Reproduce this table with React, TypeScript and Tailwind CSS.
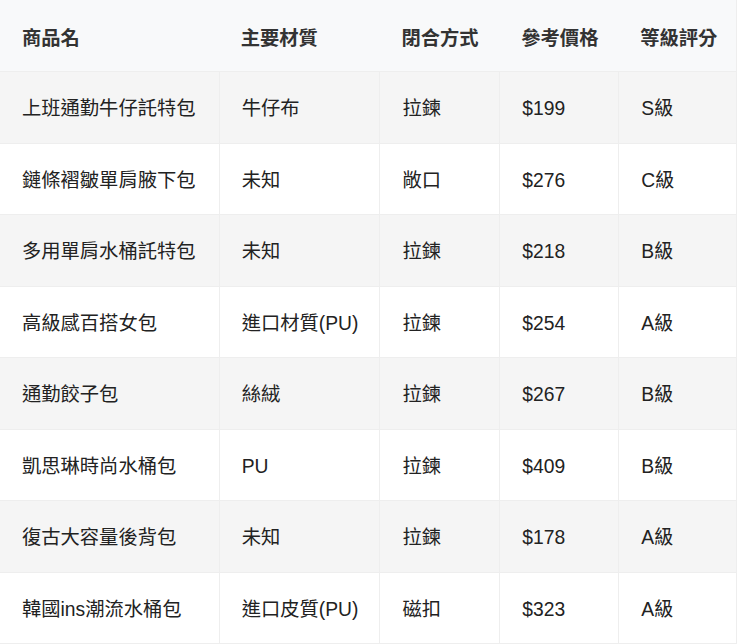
import React from "react";

const rows = [
  ["上班通勤牛仔託特包", "牛仔布", "拉鍊", "$199", "S級"],
  ["鏈條褶皺單肩腋下包", "未知", "敞口", "$276", "C級"],
  ["多用單肩水桶託特包", "未知", "拉鍊", "$218", "B級"],
  ["高級感百搭女包", "進口材質(PU)", "拉鍊", "$254", "A級"],
  ["通勤餃子包", "絲絨", "拉鍊", "$267", "B級"],
  ["凱思琳時尚水桶包", "PU", "拉鍊", "$409", "B級"],
  ["復古大容量後背包", "未知", "拉鍊", "$178", "A級"],
  ["韓國ins潮流水桶包", "進口皮質(PU)", "磁扣", "$323", "A級"],
];

const headers = ["商品名", "主要材質", "閉合方式", "參考價格", "等級評分"];
const widths = ["w-[219px]", "w-[161px]", "w-[120px]", "w-[119px]", "w-[118px]"];

export default function App() {
  return (
    <div
      className="w-[740px] h-[644px] bg-white overflow-hidden"
      style={{ fontFamily: '"Liberation Sans", "Noto Sans CJK TC", sans-serif' }}
    >
      <div className="w-[737px] border-r border-[#eeeeee]">
        <div className="flex h-[72px] bg-[#f8f9fa] border-b border-[#eeeeee]">
          {headers.map((h, i) => (
            <div
              key={i}
              className={`${widths[i]} flex items-center pl-[22px] pt-[7px] text-[19.3px] font-bold text-[#333333]`}
            >
              {h}
            </div>
          ))}
        </div>
        {rows.map((r, ri) => (
          <div
            key={ri}
            className={`flex h-[71.5px] border-b border-[#eeeeee] ${ri % 2 === 0 ? "bg-[#f5f5f5]" : "bg-white"}`}
          >
            {r.map((c, ci) => (
              <div
                key={ci}
                className={`${widths[ci]} flex items-center pl-[22px] pt-[5px] text-[19.3px] text-[#222222] ${ci > 0 ? "border-l border-[#eeeeee]" : ""}`}
              >
                {c}
              </div>
            ))}
          </div>
        ))}
      </div>
    </div>
  );
}
